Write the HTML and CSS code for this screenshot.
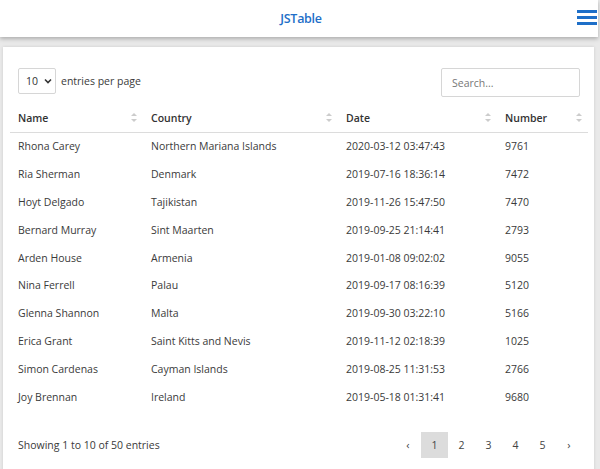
FILE: index.html
```html
<!DOCTYPE html>
<html>
<head>
<meta charset="utf-8">
<link rel="stylesheet" href="styles.css">
</head>
<body>
<header class="topbar">
  <div class="title">JSTable</div>
  <svg class="burger" width="20" height="16" viewBox="0 0 20 16"><rect x="0" y="1" width="20" height="3" fill="#1e6fc8"/><rect x="0" y="7" width="20" height="3" fill="#1e6fc8"/><rect x="0" y="13" width="20" height="3" fill="#1e6fc8"/></svg>
</header>
<main class="page">
  <section class="card">
    <div class="toolbar">
      <div class="perpage">
        <div class="select">10 <svg width="8" height="6" viewBox="0 0 8 6"><path d="M1 1.5 L4 4.5 L7 1.5" stroke="#333" stroke-width="1.6" fill="none"/></svg></div>
        <span>entries per page</span>
      </div>
      <div class="search">Search...</div>
    </div>
    <table class="tbl">
      <colgroup><col class="c1"><col class="c2"><col class="c3"><col class="c4"></colgroup>
      <thead>
        <tr>
          <th><span>Name</span><i class="sort"></i></th>
          <th><span>Country</span><i class="sort"></i></th>
          <th><span>Date</span><i class="sort"></i></th>
          <th><span>Number</span><i class="sort"></i></th>
        </tr>
      </thead>
      <tbody>
        <tr><td>Rhona Carey</td><td>Northern Mariana Islands</td><td>2020-03-12 03:47:43</td><td>9761</td></tr>
        <tr><td>Ria Sherman</td><td>Denmark</td><td>2019-07-16 18:36:14</td><td>7472</td></tr>
        <tr><td>Hoyt Delgado</td><td>Tajikistan</td><td>2019-11-26 15:47:50</td><td>7470</td></tr>
        <tr><td>Bernard Murray</td><td>Sint Maarten</td><td>2019-09-25 21:14:41</td><td>2793</td></tr>
        <tr><td>Arden House</td><td>Armenia</td><td>2019-01-08 09:02:02</td><td>9055</td></tr>
        <tr><td>Nina Ferrell</td><td>Palau</td><td>2019-09-17 08:16:39</td><td>5120</td></tr>
        <tr><td>Glenna Shannon</td><td>Malta</td><td>2019-09-30 03:22:10</td><td>5166</td></tr>
        <tr><td>Erica Grant</td><td>Saint Kitts and Nevis</td><td>2019-11-12 02:18:39</td><td>1025</td></tr>
        <tr><td>Simon Cardenas</td><td>Cayman Islands</td><td>2019-08-25 11:31:53</td><td>2766</td></tr>
        <tr><td>Joy Brennan</td><td>Ireland</td><td>2019-05-18 01:31:41</td><td>9680</td></tr>
      </tbody>
    </table>
    <div class="footer">
      <div class="info">Showing 1 to 10 of 50 entries</div>
      <nav class="pager">
        <span class="pg arrow">‹</span>
        <span class="pg active">1</span>
        <span class="pg">2</span>
        <span class="pg">3</span>
        <span class="pg">4</span>
        <span class="pg">5</span>
        <span class="pg arrow">›</span>
      </nav>
    </div>
  </section>
</main>
</body>
</html>
```

FILE: styles.css
```css
* { box-sizing: border-box; }
html, body { margin: 0; padding: 0; }
body {
  background: #e9e9e9;
  font-family: "Open Sans", "Liberation Sans", sans-serif;
  font-size: 10.5px;
  color: #3a3a3a;
  width: 600px;
  height: 469px;
  overflow: hidden;
}
.topbar {
  height: 37px;
  background: #fff;
  width: 598px;
  display: flex;
  align-items: center;
  justify-content: center;
  position: relative;
  box-shadow: 0 2px 4px rgba(0,0,0,0.25);
  z-index: 2;
}
.title {
  color: #1e6fc8;
  font-size: 12.5px;
  font-weight: 600;
  letter-spacing: -0.3px;
  padding-left: 4px;
}
.burger {
  position: absolute;
  right: 1px;
  top: 9px;
}
.page {
  padding: 10px 6px 0 3px;
}
.card {
  background: #fff;
  height: 430px;
  padding: 21px 6px 0 7px;
  box-shadow: 0 0 3px rgba(0,0,0,0.12);
}
.toolbar {
  display: flex;
  justify-content: space-between;
  align-items: flex-start;
  padding-left: 8px;
  padding-right: 8px;
}
.perpage {
  display: flex;
  align-items: center;
  gap: 5px;
  height: 26px;
}
.select {
  width: 38px;
  height: 26px;
  border: 1px solid #d6d6d6;
  border-radius: 2px;
  display: flex;
  align-items: center;
  gap: 6px;
  padding-left: 7px;
  color: #333;
}
.search {
  width: 139px;
  height: 29px;
  border: 1px solid #d6d6d6;
  border-radius: 2px;
  padding-left: 10px;
  display: flex;
  align-items: center;
  color: #777;
}
.tbl {
  width: 578px;
  border-collapse: collapse;
  table-layout: fixed;
  margin-top: 4px;
}
.c1 { width: 133px; }
.c2 { width: 195px; }
.c3 { width: 159px; }
.c4 { width: 91px; }
.tbl th {
  text-align: left;
  font-weight: 600;
  color: #333;
  height: 31px;
  padding: 3px 8px 0 8px;
  border-bottom: 1px solid #dcdcdc;
  position: relative;
}
.tbl td {
  height: 27.9px;
  padding: 0 8px;
  white-space: nowrap;
}
.sort {
  position: absolute;
  right: 6px;
  top: 12px;
  width: 6px;
  height: 9px;
}
.sort::before, .sort::after {
  content: "";
  position: absolute;
  left: 0;
  border-left: 3px solid transparent;
  border-right: 3px solid transparent;
}
.sort::before { top: 0; border-bottom: 3px solid #ccc; }
.sort::after { bottom: 0; border-top: 3px solid #ccc; }
.footer {
  display: flex;
  justify-content: space-between;
  align-items: center;
  padding: 21px 0 0 8px;
}
.pager {
  display: flex;
  align-items: center;
  padding-right: 6px;
}
.pg {
  width: 27px;
  height: 26px;
  display: flex;
  align-items: center;
  justify-content: center;
  color: #444;
}
.pg.arrow { width: 26px; font-size: 11px; }
.pg.active { background: #dcdcdc; }
```
